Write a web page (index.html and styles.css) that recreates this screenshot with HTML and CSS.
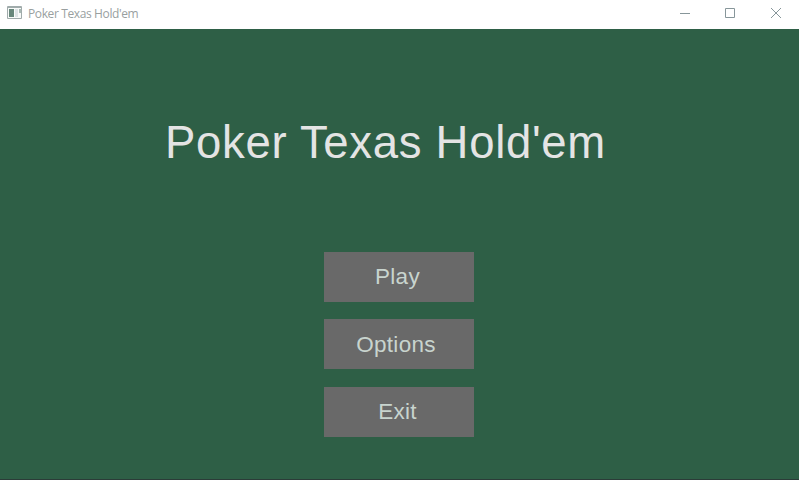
FILE: index.html
```html
<!DOCTYPE html>
<html lang="en">
<head>
<meta charset="utf-8">
<title>Poker Texas Hold'em</title>
<link rel="stylesheet" href="styles.css">
</head>
<body>
<header class="titlebar">
<svg class="app-icon" width="16" height="14" viewBox="0 0 16 14"><path fill="#f8faf9" stroke="#a0abab" d="M.5.5h14v12H.5z"/><path fill="#a0abab" d="M1 1h13v1H1z"/><path fill="#67877b" d="M2 3h5v8H2z"/><path fill="#dde3e5" d="M8 3h3v8H8z"/><path fill="#a9bab5" d="M12 3h2v4h-2z"/></svg>
<span class="caption">Poker Texas Hold'em</span>
<div class="controls">
<svg width="46" height="29" viewBox="0 0 46 29"><path d="M19 13.5h10"/></svg>
<svg width="46" height="29" viewBox="0 0 46 29"><path d="M18.500 8.500h9v9h-9z"/></svg>
<svg width="46" height="29" viewBox="0 0 46 29"><path d="M18 8l10 10M28 8L18 18"/></svg>
</div>
</header>
<main class="table">
<h1 class="title">Poker Texas Hold'em</h1>
<nav class="menu">
<button class="item">Play</button>
<button class="item options">Options</button>
<button class="item">Exit</button>
</nav>
</main>
</body>
</html>
```
FILE: styles.css
```css
body { margin: 0; width: 799px; height: 480px; overflow: hidden; display: flex; flex-direction: column; background: #2e5f46; font-family: "Liberation Sans", Arial, sans-serif; }
.titlebar { display: flex; height: 29px; background: #fff; }
.app-icon { margin: 6px 5px 0 7px; }
.caption { font: 12px/28px "Open Sans", sans-serif; letter-spacing: -0.38px; color: #999f9f; }
.controls { display: flex; margin-left: auto; }
.controls svg { fill: none; stroke: #87969a; }
.table { flex: 1; box-sizing: border-box; border-bottom: 1px solid #2b3c38; }
.title { margin: 87px 0 0 165px; font-size: 45.5px; line-height: 54px; letter-spacing: 0.7px; font-weight: 400; color: #e4e4e4; white-space: nowrap; }
.menu { display: flex; flex-direction: column; gap: 17.4px; width: 150px; margin: 82px 0 0 324px; }
.item { height: 50px; padding: 0 3px 0 0; border: 0; background: #696969; color: #c8d4ce; font: 22.5px/50px "Liberation Sans", Arial, sans-serif; letter-spacing: 0.3px; }
.item:last-child { margin-top: 0.2px; }
.options { padding: 1px 6px 0 0; line-height: 49px; }
```
